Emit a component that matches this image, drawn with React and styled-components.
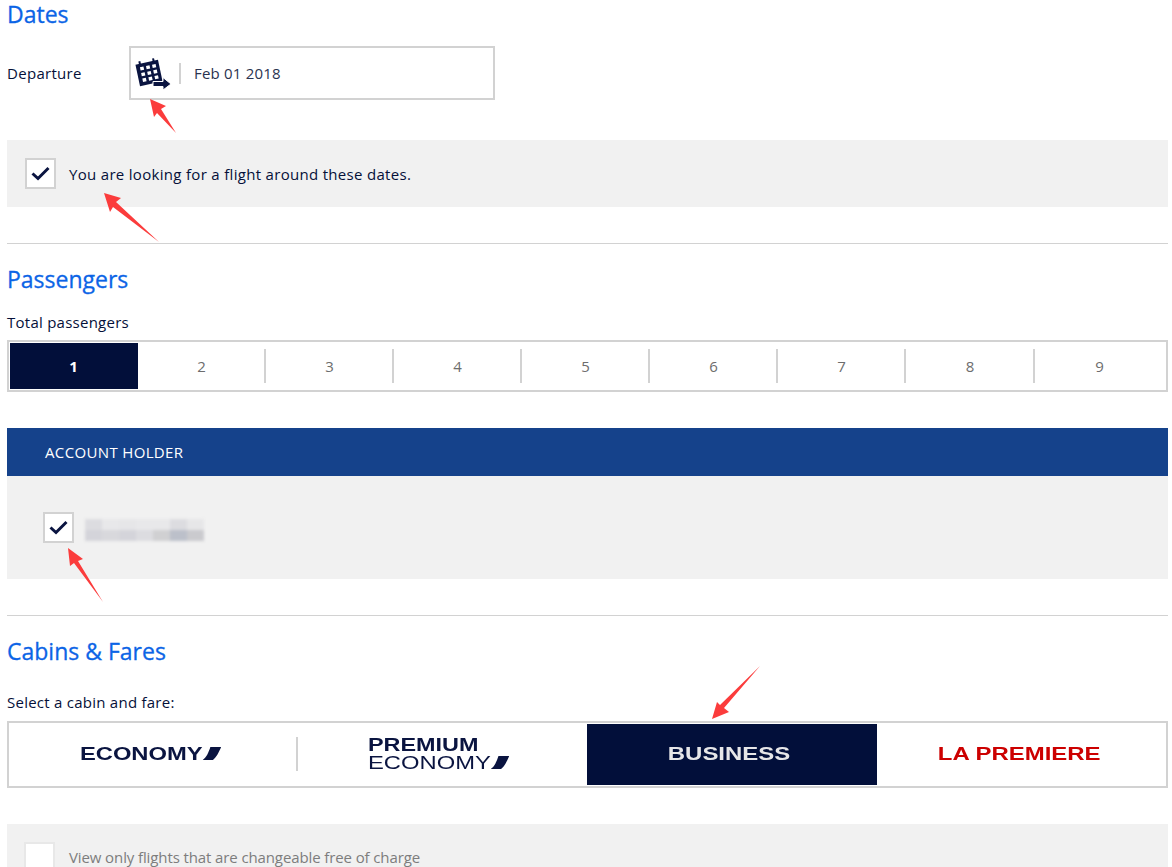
import React from "react";
import styled, { createGlobalStyle } from "styled-components";

const Global = createGlobalStyle`
  html, body { margin: 0; padding: 0; background: #fff; height: 867px; overflow: hidden; }
  body { font-family: "Open Sans", sans-serif; color: #051039; }
  #root { position: relative; height: 867px; overflow: hidden; }
`;
const Page = styled.div`
  width: 1161px;
  margin-left: 7px;
`;
const Title = styled.h2`
  margin: 0;
  font-size: 23px;
  font-weight: 400;
  line-height: 30px;
  color: #0b64e6;
  -webkit-text-stroke: 0.3px #0b64e6;
`;
const DatesTitle = styled(Title)`
  line-height: 28px;
`;
const DateRow = styled.div`
  display: flex;
  align-items: center;
  height: 54px;
  margin-top: 18px;
`;
const FieldLabel = styled.span`
  width: 122px;
  font-size: 15px;
  letter-spacing: 0.3px;
`;
const DateBox = styled.div`
  box-sizing: border-box;
  width: 366px;
  height: 54px;
  border: 2px solid #d2d2d2;
  display: flex;
  align-items: center;
  padding-left: 4px;
`;
const IconSlot = styled.div`
  width: 44px;
  height: 36px;
  display: flex;
  align-items: center;
  flex: none;
`;
const VSep = styled.div`
  width: 2px;
  height: 21px;
  background: #d2d2d2;
  margin-right: 13px;
`;
const DateText = styled.span`
  font-size: 15px;
  letter-spacing: 0.2px;
  color: #2a3350;
`;
const Panel = styled.div`
  background: #f1f1f1;
  display: flex;
  align-items: center;
`;
const AroundPanel = styled(Panel)`
  margin-top: 40px;
  height: 67px;
  padding-left: 18px;
  gap: 13px;
`;
const CheckBox = styled.div`
  box-sizing: border-box;
  width: 31px;
  height: 31px;
  background: #fff;
  border: 2px solid #d2d2d2;
  display: flex;
  align-items: center;
  justify-content: center;
  flex: none;
`;
const CheckText = styled.span`
  font-size: 15px;
  letter-spacing: 0.31px;
  color: #051039;
`;
const Rule = styled.hr`
  border: 0;
  height: 1px;
  background: #d2d2d2;
  margin: ${(p) => p.$top}px 0 0;
`;
const SectionTitle = styled(Title)`
  margin-top: ${(p) => p.$top}px;
`;
const SmallLabel = styled.div`
  font-size: 15px;
  letter-spacing: 0.25px;
  line-height: 20px;
  margin-top: ${(p) => p.$top}px;
`;
const Stepper = styled.div`
  box-sizing: border-box;
  margin-top: 8px;
  height: 52px;
  border: 2px solid #d2d2d2;
  padding: 1px;
  display: flex;
`;
const Step = styled.div`
  flex: ${(p) => (p.$w ? `0 0 ${p.$w}px` : "1")};
  display: flex;
  align-items: center;
  justify-content: center;
  font-size: 15px;
  padding-right: 1px;
  box-sizing: border-box;
  font-weight: ${(p) => (p.$active ? 700 : 400)};
  background: ${(p) => (p.$active ? "#020f3a" : "#fff")};
  color: ${(p) => (p.$active ? "#fff" : "#6d6d6d")};
  position: relative;
  &::after {
    content: "";
    display: ${(p) => (p.$sep ? "block" : "none")};
    position: absolute;
    right: 0;
    top: 6px;
    bottom: 6px;
    width: 2px;
    background: #d2d2d2;
  }
`;
const Band = styled.div`
  margin-top: 36px;
  height: 48px;
  background: #15428b;
  color: #fff;
  font-size: 15px;
  letter-spacing: 0.35px;
  display: flex;
  align-items: center;
  padding-left: 38px;
`;
const HolderPanel = styled(Panel)`
  height: 103px;
  padding-left: 36px;
  gap: 11px;
  box-sizing: border-box;
`;
const Blur = styled.div`
  display: flex;
  height: 22px;
  filter: blur(1.5px);
  margin-top: 5px;
`;
const BlurCell = styled.div`
  width: 17px;
  height: 100%;
  background: linear-gradient(${(p) => p.$top} 0 50%, ${(p) => p.$bottom} 50% 100%);
`;
const CabinRow = styled.div`
  box-sizing: border-box;
  margin-top: 9px;
  height: 67px;
  border: 2px solid #d2d2d2;
  padding: 1px 0;
  display: flex;
`;
const Cabin = styled.div`
  flex: 0 0 ${(p) => p.$w}px;
  display: flex;
  align-items: center;
  justify-content: center;
  padding: 0 5px 2px 0;
  box-sizing: border-box;
  position: relative;
  background: ${(p) => (p.$active ? "#020f3a" : "#fff")};
`;
const CabinSep = styled.div`
  position: absolute;
  right: 0;
  top: 13px;
  bottom: 14px;
  width: 2px;
  background: #d2d2d2;
`;
const Brand = styled.span`
  display: inline-flex;
  align-items: center;
  font-family: "Liberation Sans", Arial, sans-serif;
  font-weight: ${(p) => (p.$light ? 400 : 700)};
  font-size: 18px;
  line-height: 18px;
  color: ${(p) => p.$color || "#0a1440"};
  transform: scaleX(${(p) => p.$sx || 1.33});
  transform-origin: ${(p) => p.$origin || "center"};
  white-space: nowrap;
`;
const Stack = styled.div`
  display: flex;
  flex-direction: column;
  align-items: flex-start;
  width: 144px;
  margin-left: -1px;
`;
const FreePanel = styled(Panel)`
  margin-top: 36px;
  height: 60px;
  padding: 18px 0 0 17px;
  align-items: flex-start;
  gap: 14px;
  box-sizing: border-box;
`;
const EmptyBox = styled.div`
  box-sizing: border-box;
  width: 31px;
  height: 31px;
  background: #fff;
  border: 2px solid #e8e8e8;
  flex: none;
`;
const MutedText = styled.span`
  font-size: 15px;
  letter-spacing: -0.11px;
  line-height: 30px;
  color: #7d7d7d;
`;
const Arrow = styled.svg`
  position: absolute;
  left: 0;
  top: 0;
  width: 1172px;
  height: 867px;
  pointer-events: none;
`;

const Tick = () => (
  <svg width="19" height="15" viewBox="0 0 19 15">
    <path d="M1.5 7.5 L7 12.5 L17.5 2" fill="none" stroke="#0a1440" strokeWidth="3" />
  </svg>
);

const Slash = () => (
  <svg width="14" height="13" viewBox="0 0 18 13" preserveAspectRatio="none">
    <path d="M7.5 0 H18 C16 5 13 11 10 13 H0 C3.5 11 6 5 7.5 0Z" fill="#0a1440" />
  </svg>
);

const CalIcon = () => (
  <svg width="37" height="35" viewBox="0 0 37 35">
    <g transform="rotate(-12 14 17)">
      <rect x="2.5" y="6" width="23" height="22" fill="#0a1440" />
      <rect x="6" y="3.5" width="2" height="3" fill="#0a1440" />
      <rect x="20" y="3.5" width="2" height="3" fill="#0a1440" />
      {[0, 1, 2].map((r) =>
        [0, 1, 2].map((c) => (
          <rect key={`${r}${c}`} x={6.3 + c * 6.2} y={9.5 + r * 5.8} width="3.6" height="3.4" fill="#fff" />
        ))
      )}
    </g>
    <path d="M18 25.5 H28 V21.5 L36 28 L28 34 V30.5 H18 Z" fill="#0a1440" stroke="#fff" strokeWidth="1" />
  </svg>
);

const arrows = [
  "M176 133 L161 109 L166 106 L150 99 L154 117 L157 113 Z",
  "M159 242 L116 202 L121 198 L104 193 L110 212 L113 207 Z",
  "M103 602 L78 561 L83 559 L68 548 L70 566 L74 563 Z",
  "M760 666 L724 708 L729 712 L712 719 L717 702 L720 705 Z",
];

const blurCells = [
  ["#dcdce0", "#d4d4da"],
  ["#e8e8ea", "#d8d8dc"],
  ["#e6e6e8", "#d4d4da"],
  ["#e8e8ea", "#dcdce0"],
  ["#e8e8ea", "#d0d0d2"],
  ["#dcdce0", "#bcc0ca"],
  ["#e6e6e8", "#cacace"],
];

export default function App() {
  return (
    <>
      <Global />
      <Page>
        <DatesTitle>Dates</DatesTitle>
        <DateRow>
          <FieldLabel>Departure</FieldLabel>
          <DateBox>
            <IconSlot><CalIcon /></IconSlot>
            <VSep />
            <DateText>Feb 01 2018</DateText>
          </DateBox>
        </DateRow>
        <AroundPanel>
          <CheckBox><Tick /></CheckBox>
          <CheckText>You are looking for a flight around these dates.</CheckText>
        </AroundPanel>
        <Rule $top={36} />
        <SectionTitle $top={20}>Passengers</SectionTitle>
        <SmallLabel $top={18}>Total passengers</SmallLabel>
        <Stepper>
          {[1, 2, 3, 4, 5, 6, 7, 8, 9].map((n) => (
            <Step key={n} $w={n === 9 ? undefined : n === 8 ? 129 : 128} $active={n === 1} $sep={n > 1 && n < 9}>
              {n}
            </Step>
          ))}
        </Stepper>
        <Band>ACCOUNT HOLDER</Band>
        <HolderPanel>
          <CheckBox><Tick /></CheckBox>
          <Blur>
            {blurCells.map(([t, b], i) => <BlurCell key={i} $top={t} $bottom={b} />)}
          </Blur>
        </HolderPanel>
        <Rule $top={36} />
        <SectionTitle $top={20}>Cabins &amp; Fares</SectionTitle>
        <SmallLabel $top={26}>Select a cabin and fare:</SmallLabel>
        <CabinRow>
          <Cabin $w={289}>
            <Brand $sx={1.32}>ECONOMY<Slash /></Brand>
            <CabinSep />
          </Cabin>
          <Cabin $w={289}>
            <Stack>
              <Brand $origin="left" $sx={1.3}>PREMIUM</Brand>
              <Brand $origin="left" $light $sx={1.32}>ECONOMY<Slash /></Brand>
            </Stack>
          </Cabin>
          <Cabin $w={290} $active>
            <Brand $color="#e6e6e8">BUSINESS</Brand>
          </Cabin>
          <Cabin $w={289}>
            <Brand $color="#cc0000">LA PREMIERE</Brand>
          </Cabin>
        </CabinRow>
        <FreePanel>
          <EmptyBox />
          <MutedText>View only flights that are changeable free of charge</MutedText>
        </FreePanel>
      </Page>
      <Arrow viewBox="0 0 1172 867">
        {arrows.map((d) => <path key={d} d={d} fill="#fb3c3c" />)}
      </Arrow>
    </>
  );
}
